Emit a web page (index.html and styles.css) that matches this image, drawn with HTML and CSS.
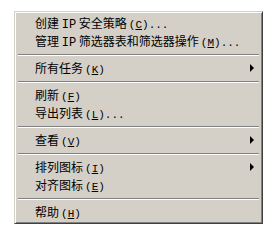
FILE: index.html
```html
<!DOCTYPE html>
<html>
<head>
<meta charset="utf-8">
<link rel="stylesheet" href="styles.css">
</head>
<body>
<div class="menu">
  <div class="item">创建 <span class="l ip">IP</span> 安全策略<span class="l k">(<u>C</u>)...</span></div>
  <div class="item">管理 <span class="l ip">IP</span> 筛选器表和筛选器操作<span class="l k">(<u>M</u>)...</span></div>
  <div class="sep"></div>
  <div class="item sub">所有任务<span class="l k">(<u>K</u>)</span></div>
  <div class="sep"></div>
  <div class="item">刷新<span class="l k">(<u>F</u>)</span></div>
  <div class="item">导出列表<span class="l k">(<u>L</u>)...</span></div>
  <div class="sep"></div>
  <div class="item sub">查看<span class="l k">(<u>V</u>)</span></div>
  <div class="sep"></div>
  <div class="item sub">排列图标<span class="l k">(<u>I</u>)</span></div>
  <div class="item">对齐图标<span class="l k">(<u>E</u>)</span></div>
  <div class="sep"></div>
  <div class="item">帮助<span class="l k">(<u>H</u>)</span></div>
</div>
</body>
</html>
```
FILE: styles.css
```css
html, body {
  margin: 0;
  background: #ffffff;
}
body {
  padding: 11px 0 0 14px;
}
.menu {
  width: 243px;
  background: #d4d0c8;
  border-top: 1px solid #d4d0c8;
  border-left: 1px solid #d4d0c8;
  border-right: 1px solid #404040;
  border-bottom: 1px solid #404040;
  box-shadow: inset 1px 1px 0 #ffffff, inset -1px -1px 0 #808080;
  padding: 2px;
  font-family: "Noto Sans CJK SC", sans-serif;
  font-size: 12px;
  color: #000000;
}
.item {
  height: 18px;
  line-height: 18px;
  padding-left: 18px;
  white-space: nowrap;
  position: relative;
}
.l {
  font-family: "Liberation Mono", monospace;
  font-size: 11px;
}
.ip {
  font-size: 12px;
}
.k {
  margin-left: 2px;
}
.sub::after {
  content: "";
  position: absolute;
  right: 6px;
  top: 5px;
  border-left: 4px solid #000000;
  border-top: 4px solid transparent;
  border-bottom: 4px solid transparent;
}
.sep {
  height: 9px;
  display: flex;
  flex-direction: column;
  justify-content: center;
  margin: 0 1px;
}
.sep::before {
  content: "";
  display: block;
  height: 1px;
  background: #808080;
}
.sep::after {
  content: "";
  display: block;
  height: 1px;
  background: #ffffff;
}
```
